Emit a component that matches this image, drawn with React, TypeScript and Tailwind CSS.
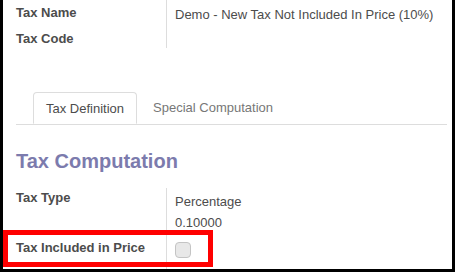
export default function App() {
  return (
    <div className="relative w-[455px] h-[272px] overflow-hidden bg-white border-l-[3px] border-r-[3px] border-b-[3px] border-black font-['Liberation_Sans',Arial,sans-serif] text-[13px] text-[#4c4c4c]">
      {/* header fields */}
      <div className="flex ml-[13px] h-[48px]">
        <div className="w-[151px] border-r border-[#dddddd] font-bold leading-[20px]">
          <div className="mt-[3px]">Tax Name</div>
          <div className="mt-[6px]">Tax Code</div>
        </div>
        <div className="pl-[8px] pt-[5px] leading-[20px]">
          Demo - New Tax Not Included In Price (10%)
        </div>
      </div>

      {/* tabs */}
      <div className="mt-[44px] ml-[13px] mr-[5px] flex border-b border-[#dddddd] pl-[17px]">
        <div className="-mb-px h-[32px] px-[12px] leading-[32px] bg-white border border-[#dddddd] border-b-transparent rounded-t-[4px]">
          Tax Definition
        </div>
        <div className="ml-[4px] h-[32px] px-[12px] leading-[32px] text-[#777777]">
          Special Computation
        </div>
      </div>

      <h1 className="mt-[24px] ml-[13px] text-[20px] leading-[24px] font-bold text-[#7c7bad]">
        Tax Computation
      </h1>

      <div className="flex ml-[13px] mt-[15px] h-[81px]">
        <div className="w-[151px] border-r border-[#dddddd] font-bold leading-[20px]">
          <div>Tax Type</div>
          <div className="mt-[30px]">Tax Included in Price</div>
        </div>
        <div className="pl-[8px] leading-[20px]">
          <div className="mt-[4px]">Percentage</div>
          <div className="mt-[1px]">0.10000</div>
          <div className="mt-[9px] w-[16px] h-[16px] rounded-[4px] bg-[#e8e8e8] border border-[#c4c4c4]" />
        </div>
      </div>

      {/* highlight annotation */}
      <div className="absolute left-0 top-[230px] w-[210px] h-[37px] border-[5px] border-[#ff0000]" />
    </div>
  )
}
